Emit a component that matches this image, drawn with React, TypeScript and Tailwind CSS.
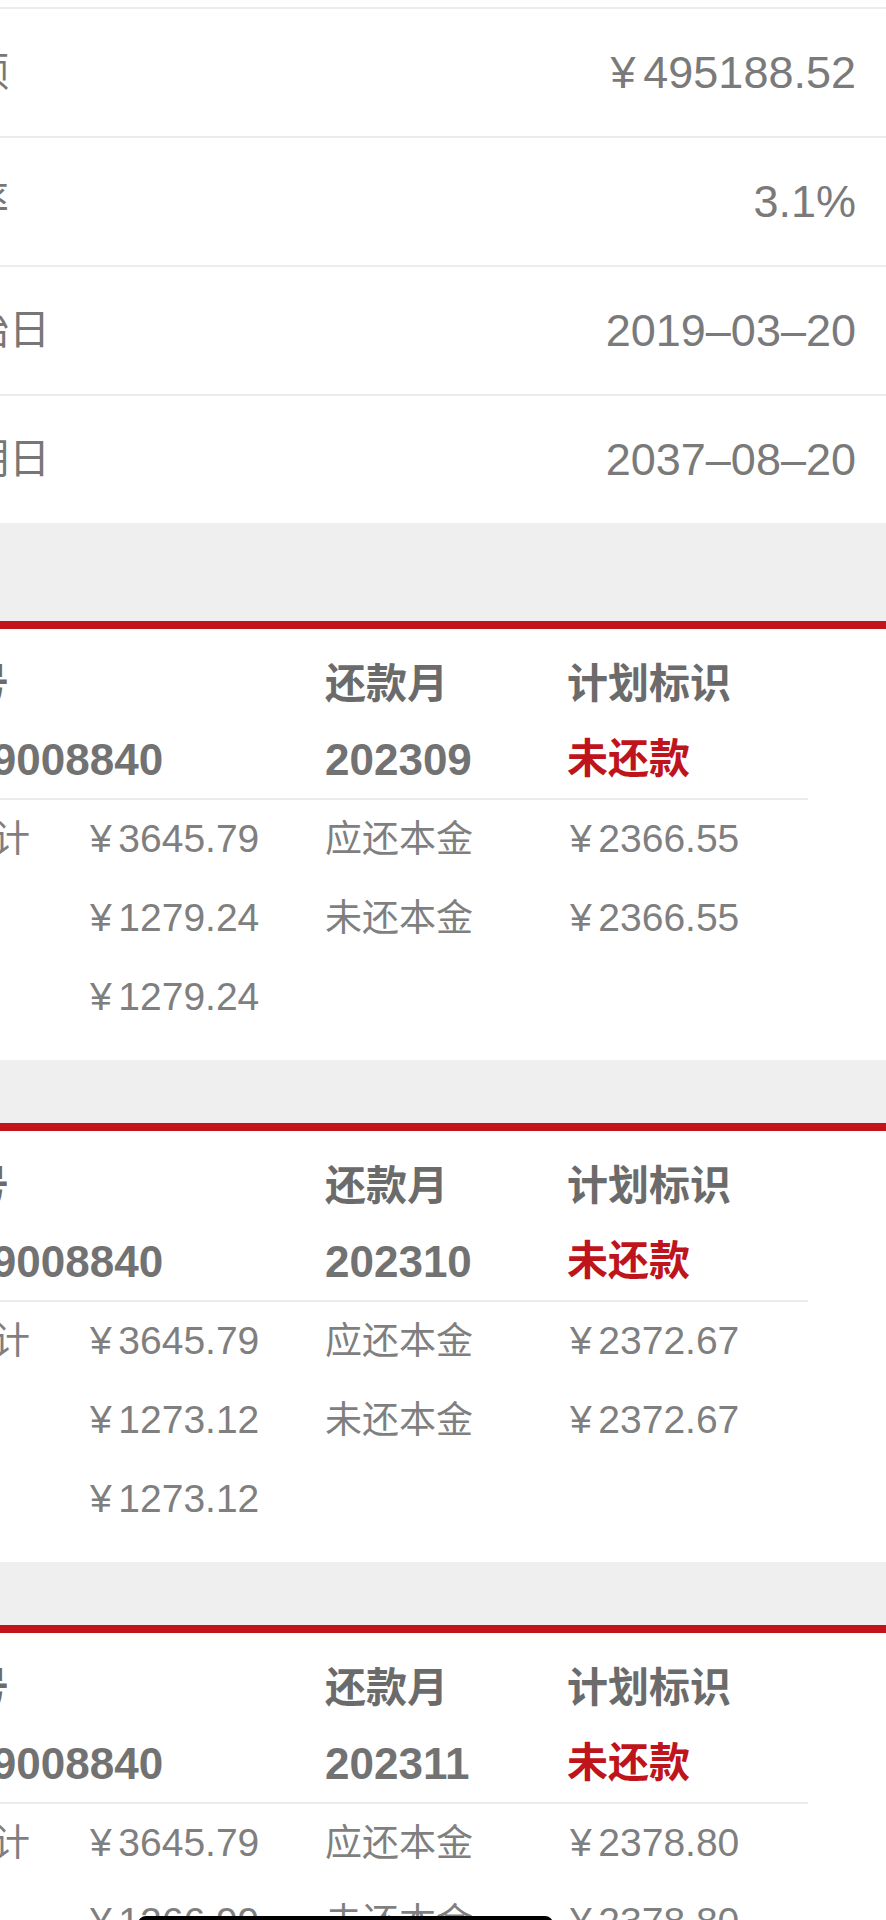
const font = "font-['Liberation_Sans','Noto_Sans_CJK_SC',sans-serif]";

type Plan = {
  month: string;
  total: string;
  interest: string;
  unpaidInterest: string;
  principal: string;
  unpaidPrincipal: string;
};

const summary = [
  { label: "贷款金额", value: "495188.52", money: true },
  { label: "执行利率", value: "3.1%" },
  { label: "贷款起始日", value: "2019–03–20" },
  { label: "贷款到期日", value: "2037–08–20" },
];

const plans: Plan[] = [
  {
    month: "202309",
    total: "3645.79",
    interest: "1279.24",
    unpaidInterest: "1279.24",
    principal: "2366.55",
    unpaidPrincipal: "2366.55",
  },
  {
    month: "202310",
    total: "3645.79",
    interest: "1273.12",
    unpaidInterest: "1273.12",
    principal: "2372.67",
    unpaidPrincipal: "2372.67",
  },
  {
    month: "202311",
    total: "3645.79",
    interest: "1266.99",
    unpaidInterest: "1266.99",
    principal: "2378.80",
    unpaidPrincipal: "2378.80",
  },
];

const Money = ({ value }: { value: string }) => (
  <span className="whitespace-nowrap">
    <span className="mr-[0.17em]">¥</span>
    {value}
  </span>
);

const SummaryRow = ({ label, value, money }: { label: string; value: string; money?: boolean }) => (
  <div className="flex h-[129px] items-center justify-between border-t-2 border-[#ececec] pr-[30px]">
    <span className="whitespace-nowrap text-[41px] text-[#777777]">{label}</span>
    <span className="text-[45px] text-[#7a7a7a]">{money ? <Money value={value} /> : value}</span>
  </div>
);

const PlanCard = ({ plan }: { plan: Plan }) => (
  <div className="border-t-8 border-[#c3141b] bg-white pb-[23px] pt-[19px]">
    <div className="grid grid-cols-[480px_242px_1fr] text-[#6b6b6b]">
      <div className="flex h-[73px] items-center whitespace-nowrap text-[41px] font-semibold">贷款账号</div>
      <div className="flex h-[73px] items-center text-[41px] font-semibold">还款月</div>
      <div className="flex h-[73px] items-center text-[41px] font-semibold">计划标识</div>
      <div className="flex h-[77px] items-center text-[44px] font-bold text-[#727272]">6501219008840</div>
      <div className="flex h-[77px] items-center text-[44px] font-bold text-[#727272]">{plan.month}</div>
      <div className="flex h-[77px] items-center text-[41px] font-semibold text-[#c0141c]">未还款</div>
    </div>

    <div className="h-[2px] w-[963px] bg-[#ebebeb]" />

    <div className="grid grid-cols-[245px_235px_245px_1fr] text-[#7f7f7f]">
      <div className="flex h-[79px] items-center whitespace-nowrap text-[37px]">应还款合计</div>
      <div className="flex h-[79px] items-center text-[39px]">
        <Money value={plan.total} />
      </div>
      <div className="flex h-[79px] items-center text-[37px]">应还本金</div>
      <div className="flex h-[79px] items-center text-[39px]">
        <Money value={plan.principal} />
      </div>

      <div className="flex h-[79px] items-center whitespace-nowrap text-[37px]">应还利息</div>
      <div className="flex h-[79px] items-center text-[39px]">
        <Money value={plan.interest} />
      </div>
      <div className="flex h-[79px] items-center text-[37px]">未还本金</div>
      <div className="flex h-[79px] items-center text-[39px]">
        <Money value={plan.unpaidPrincipal} />
      </div>

      <div className="flex h-[79px] items-center whitespace-nowrap text-[37px]">未还利息</div>
      <div className="flex h-[79px] items-center text-[39px]">
        <Money value={plan.unpaidInterest} />
      </div>
      <div />
      <div />
    </div>
  </div>
);

export default function App() {
  return (
    <div className={`relative h-[1920px] w-[886px] overflow-hidden bg-white ${font}`}>
      {/* page is scrolled sideways, the left labels run off screen */}
      <div className="-ml-[155px] w-[1041px]">
        <div className="h-[7px] bg-white" />
        {summary.map((row) => (
          <SummaryRow key={row.label} {...row} />
        ))}

        <div className="h-[98px] bg-[#efefef]" />

        {plans.map((plan) => (
          <div key={plan.month}>
            <PlanCard plan={plan} />
            <div className="h-[63px] bg-[#efefef]" />
          </div>
        ))}
      </div>

      <div className="absolute -bottom-[12px] left-[138px] h-[16px] w-[415px] rounded-full bg-black" />
    </div>
  );
}
